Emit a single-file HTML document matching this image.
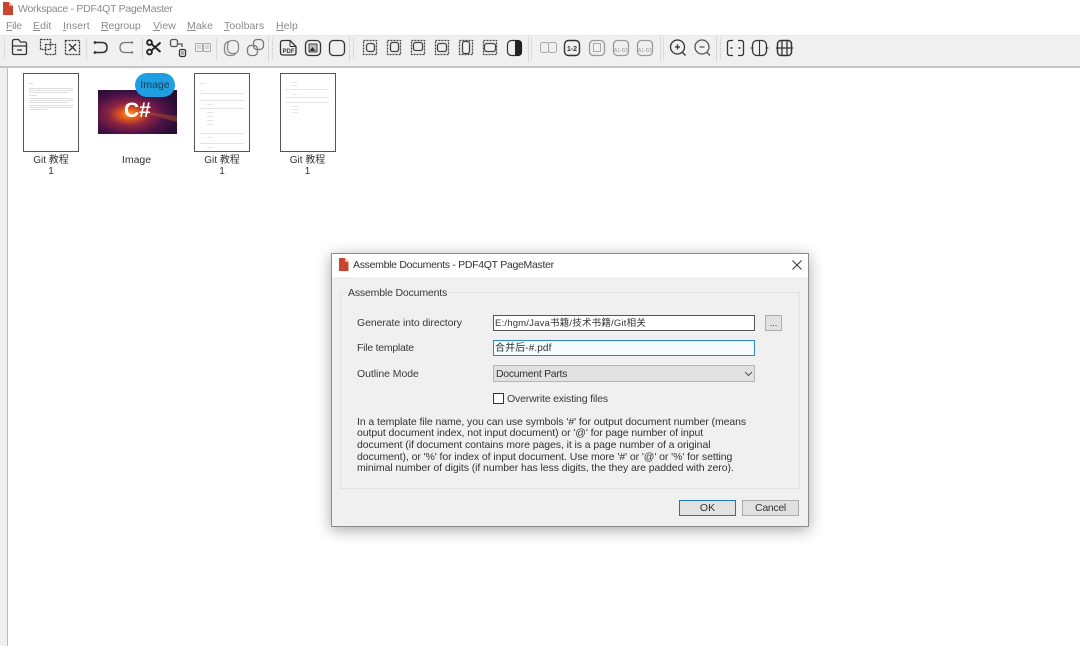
<!DOCTYPE html>
<html><head><meta charset="utf-8"><style>
html,body{margin:0;padding:0;width:1080px;height:646px;overflow:hidden;background:#fff}
body{position:relative;font-family:"Liberation Sans","Noto Sans CJK SC",sans-serif;font-size:10.5px;color:#333;filter:blur(.3px)}
.a{position:absolute;white-space:nowrap}
.m{color:#8a8a8a;top:20px;font-size:10.5px;letter-spacing:.08px}
.m u{text-decoration:underline}
.c{text-align:center;transform:translateX(-50%);font-size:10px;color:#333;line-height:11.500px}
.page{position:absolute;background:#fff;border:1px solid #555;box-sizing:border-box;top:73px;height:79px;width:56px}
.l{font-size:10.5px;color:#3a3a3a}
.i{position:absolute;box-sizing:border-box;left:493px;width:262px}
</style></head><body>
<!-- title -->
<svg class="a" style="left:3px;top:2px" width="11" height="13"><path d="M0 0h6l4 4v9H0z" fill="#c8452e"/><path d="M6 0l4 4H6z" fill="#e8a090"/></svg>
<div class="a" style="left:18px;top:3px;font-size:10.5px;color:#8a8a8a;letter-spacing:-.27px">Workspace - PDF4QT PageMaster</div>
<div class="a m" style="left:6px;letter-spacing:-.3px"><u>F</u>ile</div>
<div class="a m" style="left:33px"><u>E</u>dit</div>
<div class="a m" style="left:63px"><u>I</u>nsert</div>
<div class="a m" style="left:101px;letter-spacing:-.1px"><u>R</u>egroup</div>
<div class="a m" style="left:153px"><u>V</u>iew</div>
<div class="a m" style="left:187px"><u>M</u>ake</div>
<div class="a m" style="left:224px"><u>T</u>oolbars</div>
<div class="a m" style="left:276px"><u>H</u>elp</div>
<!-- toolbar -->
<div class="a" style="left:0;top:35px;width:1080px;height:28px;background:#f0f0f0;border-top:1px solid #e8e8e8;box-sizing:border-box"></div>
<div class="a" style="left:0;top:63px;width:1080px;height:5px;background:#f0f0f0;border-bottom:2px solid #c4c4c4;box-sizing:border-box"></div>
<div class="a" style="left:0;top:68px;width:8px;height:578px;background:#f0f0f0;border-right:1px solid #bdbdbd;box-sizing:border-box"></div>
<svg class="a" style="left:0;top:33px" width="1080" height="30" fill="none" stroke="#333" stroke-width="1.3">
<g stroke="#bbb" stroke-width="1" stroke-dasharray="1 1.5"><path d="M4.500 5v22M272.500 5v22M353.500 5v22M531.500 5v22M663.500 5v22M720.500 5v22"/></g>
<g stroke="#d8d8d8" stroke-width="1"><path d="M86.500 5v22M142.500 5v22M216.500 5v22M268.500 3v26M349.500 3v26M528.500 3v26M660.500 3v26M716.500 3v26"/></g>
<!-- open -->
<path d="M12.500 13V8.500q0-2 2-2h4l2 2.500h4q2 0 2 2V13M12.500 13h14v7q0 1.500-1.500 1.500H14q-1.500 0-1.500-1.500z"/><path d="M17 17h5"/>
<!-- dashed -->
<g stroke-dasharray="2 1"><rect x="40.500" y="6.500" width="10" height="10"/><rect x="45.500" y="11.500" width="10" height="10"/></g>
<rect x="65.500" y="7.500" width="14" height="14" stroke-dasharray="2 1"/><path d="M69 11l7 7M76 11l-7 7"/>
<!-- undo/redo -->
<path d="M95 9.500h7q5 0 5 5t-5 5h-7" stroke-width="1.500"/><circle cx="95" cy="9.500" r="1.400" fill="#333" stroke="none"/><circle cx="95" cy="19.500" r="1.400" fill="#333" stroke="none"/>
<path d="M132 9.500h-7q-5 0-5 5t5 5h7" stroke="#777"/><circle cx="132" cy="9.500" r="1.200" fill="#777" stroke="none"/><circle cx="132" cy="19.500" r="1.200" fill="#777" stroke="none"/>
<!-- scissors -->
<g stroke="#222" stroke-width="1.900"><circle cx="149.500" cy="9.500" r="2.400"/><circle cx="149.500" cy="19" r="2.400"/><path d="M151.500 11l9 8M151.500 17.500l9-8"/></g>
<!-- move -->
<rect x="170.500" y="6.500" width="7" height="7" rx="2" stroke="#555"/><path d="M178 11h4v3" stroke="#555"/><rect x="179.500" y="16.500" width="6" height="7" rx="1.500"/><path d="M181 19h3M181 21h3" stroke-width=".8"/>
<!-- grey -->
<g stroke="#aaa" stroke-width="1"><rect x="195.500" y="10.500" width="7" height="8" rx="1"/><rect x="203.500" y="10.500" width="7" height="8" rx="1"/><path d="M197 13h4M197 15h4M205 13h4M205 15h4" stroke-width=".7"/></g>
<!-- copies -->
<g stroke="#888"><rect x="224.500" y="8.500" width="12" height="14" rx="5"/><rect x="227.500" y="7.500" width="11" height="13" rx="4.500" fill="#f0f0f0"/></g>
<g stroke="#777"><rect x="247.500" y="12.500" width="10" height="10" rx="3.500"/><rect x="253.500" y="6.500" width="10" height="10" rx="3.500"/></g>
<!-- pdf -->
<path d="M283 7.500h7l6 6v6q0 2.500-2.500 2.500H283q-2.500 0-2.500-2.500v-9.500q0-2.500 2.500-2.500z"/><path d="M290 7.500v5q0 1 1 1h5" stroke-width="1"/>
<text x="288.500" y="20" font-size="6" font-weight="700" fill="#333" stroke="none" text-anchor="middle" font-family="Liberation Sans">PDF</text>
<rect x="305.500" y="7.500" width="15" height="15" rx="4"/><rect x="309" y="11" width="8" height="8" fill="#bbb" stroke="#444" stroke-width="1"/><path d="M309.500 18l3-4 3 4z" fill="#333" stroke="none"/>
<rect x="329.500" y="7.500" width="15" height="15" rx="4"/>
<!-- dashed group -->
<g stroke="#444"><g stroke-dasharray="2 1"><rect x="363.500" y="7.500" width="13" height="14"/><rect x="387.500" y="7.500" width="13" height="14"/><rect x="411.500" y="7.500" width="13" height="14"/><rect x="435.500" y="7.500" width="13" height="14"/><rect x="459.500" y="7.500" width="13" height="14"/><rect x="483.500" y="7.500" width="13" height="14"/></g>
<rect x="366.500" y="10.500" width="8" height="8" rx="2.500"/><rect x="390.500" y="9.500" width="8" height="9" rx="2"/><rect x="413.500" y="9.500" width="9" height="8" rx="2"/><rect x="437.500" y="10.500" width="9" height="8" rx="2"/><rect x="462.500" y="8.500" width="7" height="12" rx="2"/><rect x="484.500" y="10.500" width="11" height="8" rx="2.500"/></g>
<!-- contrast -->
<rect x="507.500" y="7.500" width="14" height="15" rx="4" stroke-width="1.200"/><path d="M515 7h3q4 0 4 4v8q0 4-4 4h-3z" fill="#222" stroke="none"/>
<!-- numbering -->
<g stroke="#aaa" stroke-width="1"><rect x="540.500" y="9.500" width="8" height="10" rx="2"/><rect x="548.500" y="9.500" width="8" height="10" rx="2"/></g>
<rect x="564.500" y="7.500" width="15" height="15" rx="4" stroke-width="1.400"/><text x="572" y="18" font-size="7" font-weight="700" fill="#333" stroke="none" text-anchor="middle" font-family="Liberation Sans">1-2</text>
<g stroke="#999"><rect x="589.500" y="7.500" width="15" height="15" rx="4"/><rect x="593.500" y="10.500" width="7" height="8" stroke-width=".8"/><rect x="613.500" y="7.500" width="15" height="15" rx="4"/><rect x="637.500" y="7.500" width="15" height="15" rx="4"/></g>
<text x="621" y="19" font-size="5" fill="#999" stroke="none" text-anchor="middle" font-family="Liberation Sans">A1-B1</text>
<text x="645" y="19" font-size="5" fill="#999" stroke="none" text-anchor="middle" font-family="Liberation Sans">A1-B1</text>
<!-- zoom -->
<circle cx="677.500" cy="14" r="7"/><path d="M675 14h5M677.500 11.500v5M682.500 19.500l3 3"/>
<circle cx="702" cy="14" r="7" stroke="#555"/><path d="M699.500 14h5M707 19.500l3 3" stroke="#555"/>
<!-- fit -->
<path d="M733 7.500h-3q-2.500 0-2.500 2.500v10q0 2.500 2.500 2.500h3M738 7.500h3q2.500 0 2.500 2.500v10q0 2.500-2.500 2.500h-3"/><path d="M730.500 15h2M738.500 15h2" stroke-width="1.500"/>
<rect x="752.500" y="7.500" width="14" height="15" rx="4.500"/><path d="M759.500 7v16M750.500 15h3M765.500 15h3" stroke-width="1.100"/>
<rect x="777.500" y="7.500" width="14" height="15" rx="3.500" stroke-width="1.500"/><path d="M782 7v16M787 7v16M776 15h17" stroke-width="1.300"/>
</svg>
<!-- items -->
<div class="page" style="left:23px"><svg width="54" height="77"><g stroke="#d4d4d4" stroke-width=".7"><path d="M5 9.500h4M5 14.500h44M5 16.500h44M5 18.500h40M5 21.500h8M5 24.500h44M5 26.500h44M5 28.500h40M5 31.500h44M5 33.500h44M5 35.500h18"/></g></svg></div>
<div class="page" style="left:194px"><svg width="54" height="77"><g stroke="#dcdcdc" stroke-width=".7"><path d="M5 9.500h6M5 16.500h3M5 19.500h44M5 26.500h44M12 30.500h6M5 34.500h44M12 38.500h6M12 42.500h6M12 46.500h6M12 50.500h6M5 59.500h44M12 63.500h6M5 69.500h44M12 73.500h6"/></g></svg></div>
<div class="page" style="left:280px"><svg width="54" height="77"><g stroke="#dedede" stroke-width=".7"><path d="M11 8.500h5M11 11.500h5M4 15.500h44M11 20.500h5M4 23.500h44M4 28.500h44M11 32.500h6M11 35.500h6M11 38.500h6"/></g></svg></div>
<svg class="a" style="left:98px;top:90px" width="79" height="44" font-family="Liberation Sans"><defs>
<radialGradient id="g" cx=".4" cy=".55" r=".62"><stop offset="0" stop-color="#ffa52c"/><stop offset=".18" stop-color="#e25a1c"/><stop offset=".42" stop-color="#8e2440"/><stop offset=".72" stop-color="#4e1348"/><stop offset="1" stop-color="#2a0e36"/></radialGradient></defs>
<rect width="79" height="44" fill="url(#g)"/><path d="M36 20L79 26V32z" fill="#c85a24" opacity=".4"/>
<text x="26" y="27" font-size="21" font-weight="700" fill="#fff">C#</text></svg>
<div class="a" style="left:135px;top:73px;width:40px;height:24px;border-radius:13px;background:#1f9fe2;color:#14405a;font-size:10.5px;line-height:24px;text-align:center">Image</div>
<div class="a c" style="left:51px;top:154.500px">Git 教程<br>1</div>
<div class="a c" style="left:136.500px;top:154.500px;font-size:10.5px">Image</div>
<div class="a c" style="left:222px;top:154.500px">Git 教程<br>1</div>
<div class="a c" style="left:307.500px;top:154.500px">Git 教程<br>1</div>
<!-- dialog -->
<div class="a" style="left:331px;top:253px;width:478px;height:274px;background:#f0f0f0;border:1px solid #8c8c8c;box-sizing:border-box;box-shadow:0 3px 14px rgba(0,0,0,.35)"></div>
<div class="a" style="left:332px;top:254px;width:476px;height:23px;background:#fff"></div>
<svg class="a" style="left:339px;top:258px" width="10" height="13"><path d="M0 0h6l3.500 4v9H0z" fill="#c8452e"/><path d="M6 0l3.500 4H6z" fill="#eeb0a0"/></svg>
<div class="a" style="left:353px;top:259px;color:#333;letter-spacing:-.3px">Assemble Documents - PDF4QT PageMaster</div>
<svg class="a" style="left:792px;top:260px" width="10" height="10"><path d="M.5.500l9 9M9.500.500l-9 9" stroke="#333" fill="none"/></svg>
<div class="a" style="left:340px;top:292px;width:460px;height:197px;border:1px solid #e3e3e3;box-sizing:border-box"></div>
<div class="a l" style="left:348px;top:287px;background:#f0f0f0;letter-spacing:-.17px">Assemble Documents</div>
<div class="a l" style="left:357px;top:317px;letter-spacing:-.08px">Generate into directory</div>
<div class="a l" style="left:357px;top:342px;letter-spacing:-.25px">File template</div>
<div class="a l" style="left:357px;top:368px;letter-spacing:-.05px">Outline Mode</div>
<div class="i" style="top:315px;height:16px;background:#fff;border:1px solid #555;padding:2px 1px 0;line-height:12px;color:#333;font-size:9.500px;letter-spacing:.2px">E:/hgm/Java书籍/技术书籍/Git相关</div>
<div class="a" style="left:765px;top:315px;width:17px;height:16px;background:#e1e1e1;border:1px solid #adadad;box-sizing:border-box;text-align:center;line-height:15px;font-size:9px;color:#333">...</div>
<div class="i" style="top:340px;height:16px;background:#f6fcff;border:1px solid #2b86c5;padding:2px 1px 0;line-height:12px;color:#333;font-size:10px;letter-spacing:.1px">合并后-#.pdf</div>
<div class="i" style="top:365px;height:17px;background:#e1e1e1;border:1px solid #b5b5b5;padding:2px 2px;line-height:12px;color:#333;letter-spacing:-.3px">Document Parts</div>
<svg class="a" style="left:744px;top:371px" width="9" height="6"><path d="M1 1l3.500 3.500L8 1" stroke="#555" fill="none"/></svg>
<div class="a" style="left:493px;top:393px;width:11px;height:11px;background:#fff;border:1px solid #333;box-sizing:border-box"></div>
<div class="a l" style="left:507px;top:393px;letter-spacing:-.17px">Overwrite existing files</div>
<div class="a" style="left:357px;top:416.500px;line-height:11.700px;font-size:10.500px;color:#333;letter-spacing:-.08px">In a template file name, you can use symbols '#' for output document number (means<br>output document index, not input document) or '@' for page number of input<br>document (if document contains more pages, it is a page number of a original<br>document), or '%' for index of input document. Use more '#' or '@' or '%' for setting<br>minimal number of digits (if number has less digits, the they are padded with zero).</div>
<div class="a" style="left:679px;top:500px;width:57px;height:16px;background:#e1e1e1;border:1.500px solid #1a78c2;box-sizing:border-box;text-align:center;line-height:14px;color:#333">OK</div>
<div class="a" style="left:742px;top:500px;width:57px;height:16px;background:#e1e1e1;border:1px solid #adadad;box-sizing:border-box;text-align:center;line-height:14px;color:#333;letter-spacing:-.3px">Cancel</div>
</body></html>
